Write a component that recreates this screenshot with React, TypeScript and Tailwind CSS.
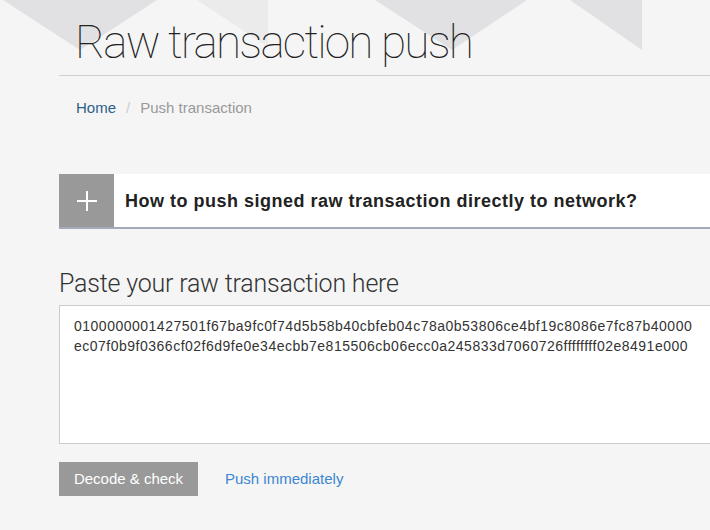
import React from "react";

export default function App() {
  return (
    <div className="relative w-[710px] h-[530px] overflow-hidden bg-[#f5f5f5]" style={{ fontFamily: '"Liberation Sans", Arial, sans-serif' }}>
      <svg className="absolute left-0 top-0" width="710" height="60" viewBox="0 0 710 60">
        <polygon points="3,0 157,0 80,50" fill="#e1e1e3" />
        <polygon points="197,0 268,0 268,47" fill="#ebebec" />
        <polygon points="375,0 527,0 452,50" fill="#e1e1e3" />
        <polygon points="570,0 642,0 642,50" fill="#e1e1e3" />
      </svg>
      <div className="relative pl-[59px] w-[1000px]">
        <h1 className="pt-[14px] pl-[16px] h-[75px] text-[46px] leading-[56px] font-thin tracking-[-1.8px] text-[#222]" style={{ fontFamily: 'Roboto, "Liberation Sans", sans-serif' }}>
          Raw transaction push
        </h1>
        <div className="border-t border-[#cfcfcf]" />
        <div className="flex items-center gap-[10px] pl-[17px] pt-[17px] h-[47px] text-[15px]">
          <span className="text-[#2c5f8a]">Home</span>
          <span className="text-[#cccccc]">/</span>
          <span className="text-[#999999]">Push transaction</span>
        </div>
        <div className="mt-[51px] flex h-[55px] bg-white border-b-2 border-[#a3abb6]">
          <div className="w-[55px] bg-[#999999] flex items-center justify-center">
            <svg width="22" height="22" viewBox="0 0 22 22">
              <rect x="10" y="1" width="2" height="20" fill="#fff" />
              <rect x="1" y="10" width="20" height="2" fill="#fff" />
            </svg>
          </div>
          <div className="flex items-center pl-[11px] pt-[2px] text-[18px] tracking-[0.5px] font-bold text-[#222]">
            How to push signed raw transaction directly to network?
          </div>
        </div>
        <div className="mt-[39px] text-[25px] leading-[32px] font-light tracking-[-0.2px] text-[#333]" style={{ fontFamily: 'Roboto, "Liberation Sans", sans-serif' }}>
          Paste your raw transaction here
        </div>
        <div className="mt-[5px] h-[139px] bg-white border border-[#cccccc] px-[14px] pt-[10px] text-[14px] leading-[20px] tracking-[0.5px] text-[#333] whitespace-nowrap overflow-hidden">
          <div>0100000001427501f67ba9fc0f74d5b58b40cbfeb04c78a0b53806ce4bf19c8086e7fc87b40000</div>
          <div>ec07f0b9f0366cf02f6d9fe0e34ecbb7e815506cb06ecc0a245833d7060726ffffffff02e8491e000</div>
        </div>
        <div className="mt-[18px] flex items-center">
          <div className="w-[139px] h-[34px] bg-[#999999] text-white text-[15px] flex items-center justify-center">Decode &amp; check</div>
          <div className="ml-[27px] text-[15px] text-[#3b87cf]">Push immediately</div>
        </div>
      </div>
    </div>
  );
}
